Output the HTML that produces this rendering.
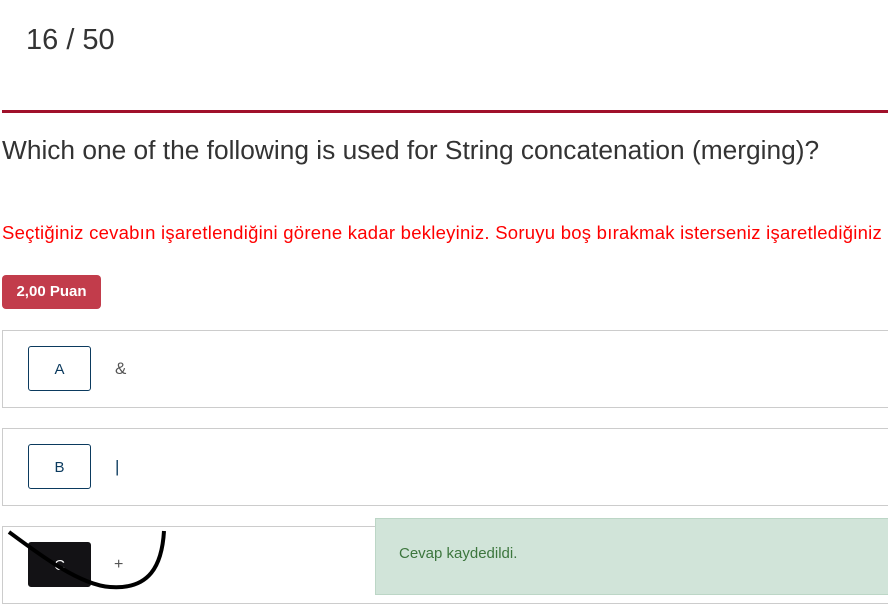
<!DOCTYPE html>
<html><head><meta charset="utf-8"><style>
body{margin:0;width:888px;height:612px;overflow:hidden;background:#fff;font-family:"Liberation Sans",sans-serif;position:relative}
.a{position:absolute;white-space:nowrap}
.opt{position:absolute;left:2px;width:890px;height:76px;border:1px solid #ccc;box-sizing:border-box}
.let{position:absolute;left:28px;width:63px;height:45px;border:1px solid #0b3a5e;border-radius:3px;box-sizing:border-box;font-size:15px;color:#0b3a5e;text-align:center;line-height:45px}
</style></head><body>
<div class="a" style="left:26px;top:24px;font-size:29px;color:#333">16 / 50</div>
<div class="a" style="left:2px;top:110px;width:886px;height:3px;background:#a0102a"></div>
<div class="a" style="left:2px;top:135px;font-size:26.3px;color:#333">Which one of the following is used for String concatenation (merging)?</div>
<div class="a" style="left:2px;top:222px;font-size:18.5px;color:#f00;letter-spacing:0.25px">Seçtiğiniz cevabın işaretlendiğini görene kadar bekleyiniz. Soruyu boş bırakmak isterseniz işaretlediğiniz</div>
<div class="a" style="left:2px;top:275px;width:99px;height:34px;background:#c23c4b;border-radius:4px;color:#fff;font-weight:bold;font-size:15px;text-align:center;line-height:34px">2,00 Puan</div>
<div class="opt" style="top:330px;height:78px"></div>
<div class="let" style="top:346px">A</div>
<div class="a" style="left:115px;top:359px;font-size:17px;color:#555">&amp;</div>
<div class="opt" style="top:428px;height:78px"></div>
<div class="let" style="top:444px">B</div>
<div class="a" style="left:115px;top:457px;font-size:17px;color:#0b3a5e">|</div>
<div class="opt" style="top:526px;height:78px"></div>
<div class="let" style="top:542px;background:#131215;border-color:#131215;color:#fff">C</div>
<div class="a" style="left:114px;top:556px;font-size:16px;color:#555">+</div>
<svg class="a" style="left:0;top:510px" width="200" height="100"><path d="M9 22 C40 45,80 75,110 77 C150 80,162 55,164 21" fill="none" stroke="#000" stroke-width="4"/></svg>
<div class="a" style="left:375px;top:518px;width:520px;height:77px;background:#d1e4d9;border:1px solid #bcd6c6;box-sizing:border-box"></div>
<div class="a" style="left:399px;top:545px;font-size:15px;color:#3c763d">Cevap kaydedildi.</div>
</body></html>
